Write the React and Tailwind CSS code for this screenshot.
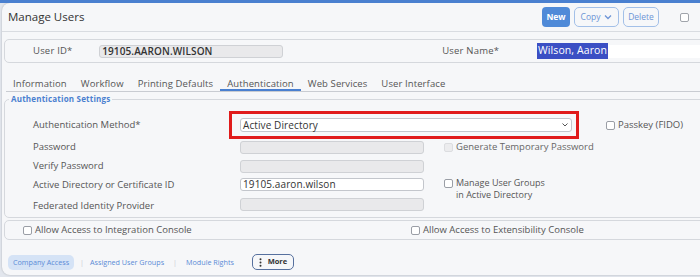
import React from 'react';

const font = { fontFamily: '"Open Sans", "Liberation Sans", sans-serif' };

const Check = ({ disabled, className = '' }) => (
  <span className={`inline-block w-[9px] h-[9px] rounded-[2px] border shrink-0 ${disabled ? 'border-[#dcdde0] bg-[#ececee]' : 'border-[#9a9ea6] bg-white'} ${className}`} />
);

const Field = ({ value, disabled, w = 'w-[184px]' }) => (
  <div className={`${w} h-[13px] shrink-0 rounded-[3px] border flex items-center px-[2px] text-[10px] text-[#333] tracking-[0.1px] ${disabled ? 'bg-[#e9e9eb] border-[#cfd1d5]' : 'bg-white border-[#c3c6cc]'}`}>
    {value}
  </div>
);

const tabs = ['Information', 'Workflow', 'Printing Defaults', 'Authentication', 'Web Services', 'User Interface'];

export default function App() {
  return (
    <div style={font} className="w-[700px] h-[277px] overflow-hidden bg-[#e2e6ed] border-t-[3px] border-[#4a80d0]">
      <div className="ml-[2px] w-[720px] h-[272px] bg-[#f6f7f9] rounded-l-[8px] shadow-[0_0_2px_rgba(0,0,0,0.25)] flex flex-col">
        {/* header */}
        <div className="w-[698px] h-[29px] flex items-center pl-[6px] border-b border-[#d9dce1]">
          <h1 className="text-[11.5px] text-[#333]">Manage Users</h1>
          <div className="ml-auto flex items-center gap-[4px]">
            <button className="h-[20px] w-[28px] rounded-[4px] bg-[#4f8ad8] text-white text-[8.5px] font-bold">New</button>
            <button className="h-[20px] w-[45px] rounded-[5px] border border-[#a3c0e8] text-[#6d95d6] text-[8.5px] flex items-center justify-center gap-[4px]">
              Copy
              <svg width="8" height="6" viewBox="0 0 8 6" fill="none" stroke="#6d95d6" strokeWidth="1.3"><path d="M1 1.5 4 4.5 7 1.5" /></svg>
            </button>
            <button className="h-[20px] w-[36px] rounded-[5px] border border-[#a3c0e8] text-[#6d95d6] text-[8.5px]">Delete</button>
            <span className="ml-[17px] mr-[11px] w-[9px] h-[9px] rounded-[2px] border border-[#a0a4ab] bg-white" />
          </div>
        </div>

        {/* user id box */}
        <div className="mt-[7px] ml-[2px] h-[24px] rounded-[5px] border border-[#d5d8dd] flex items-center pl-[28px] text-[9.5px] text-[#555] tracking-[0.2px]">
          <span className="w-[72px]">User ID*</span>
          <Field value={<span className="font-semibold">19105.AARON.WILSON</span>} disabled />
          <span className="ml-[159px] w-[103px]">User Name*</span>
          <div className="w-[200px] h-[13px] bg-white flex items-center text-[10.5px] tracking-[0.1px]">
            <span className="bg-[#3b4fc4] text-white px-[1px]">Wilson, Aaron</span>
          </div>
        </div>

        {/* tabs */}
        <div className="mt-[15px] ml-[4px] flex border-b border-[#c9ccd2] h-[14px]">
          {tabs.map(t => (
            <span key={t} className={`px-[7px] text-[9.5px] leading-[12px] tracking-[0.1px] text-[#555] ${t === 'Authentication' ? 'border-b-2 border-[#4a80d0]' : ''}`}>{t}</span>
          ))}
        </div>

        {/* fieldset */}
        <fieldset className="mt-[2px] ml-[2px] h-[124px] rounded-[5px] border border-[#d5d8dd]">
          <legend className="ml-[4px] px-[2px] text-[8px] font-bold text-[#4a7fd0] tracking-[0.2px] leading-[10px]">Authentication Settings</legend>
          <div className="pl-[28px] text-[9.5px] text-[#555]">
            <div className="mt-[7px] flex items-center h-[28px]">
              <span className="w-[196px]">Authentication Method*</span>
              <div className="w-[350px] h-[28px] border-[3px] border-[#e01b1b] flex items-center pl-[8px] pr-[4px]">
                <div className="w-full h-[14px] bg-white border border-[#c3c6cc] rounded-[3px] flex items-center justify-between px-[2px] text-[10px] text-[#333] tracking-[0.1px]">
                  Active Directory
                  <svg width="8" height="6" viewBox="0 0 8 6" fill="none" stroke="#555" strokeWidth="1"><path d="M1.5 1.5 4 4 6.5 1.5" /></svg>
                </div>
              </div>
              <Check className="ml-[27px]" />
              <span className="ml-[3px]">Passkey (FIDO)</span>
            </div>
            <div className="mt-[2px] flex items-center h-[13px]">
              <span className="w-[207px]">Password</span>
              <Field disabled />
              <Check disabled className="ml-[20px]" />
              <span className="ml-[3px] text-[#666]">Generate Temporary Password</span>
            </div>
            <div className="mt-[6px] flex items-center h-[13px]">
              <span className="w-[207px]">Verify Password</span>
              <Field disabled />
            </div>
            <div className="mt-[5px] flex items-start h-[13px]">
              <span className="w-[207px] leading-[13px]">Active Directory or Certificate ID</span>
              <Field value="19105.aaron.wilson" />
              <Check className="ml-[20px] mt-[1px]" />
              <span className="ml-[3px] flex flex-col text-[9px] leading-[12.5px] -mt-[1.5px]">
                <span>Manage User Groups</span>
                <span>in Active Directory</span>
              </span>
            </div>
            <div className="mt-[7px] flex items-center h-[13px]">
              <span className="w-[207px] mt-[3px]">Federated Identity Provider</span>
              <Field disabled />
            </div>
          </div>
        </fieldset>

        {/* console access */}
        <div className="mt-[2px] ml-[2px] h-[20px] rounded-[5px] border border-[#d5d8dd] flex items-center pl-[18px] text-[9.5px] text-[#555]">
          <Check />
          <span className="ml-[3px] w-[376px]">Allow Access to Integration Console</span>
          <Check />
          <span className="ml-[3px]">Allow Access to Extensibility Console</span>
        </div>

        {/* bottom nav */}
        <div className="mt-[14px] ml-[6px] flex items-center text-[7.2px] text-[#5b8bd6]">
          <span className="h-[15px] px-[5px] rounded-[5px] bg-[#d5e3f6] flex items-center">Company Access</span>
          <span className="mx-[6px] text-[#c9ccd2]">|</span>
          <span>Assigned User Groups</span>
          <span className="mx-[9px] text-[#c9ccd2]">|</span>
          <span>Module Rights</span>
          <button className="ml-[18px] h-[16px] w-[42px] rounded-[5px] border border-[#56709e] flex items-center justify-center gap-[6px] text-[7.5px] font-bold text-[#333]">
            <svg width="3" height="9" viewBox="0 0 3 9" fill="#333"><circle cx="1.5" cy="1.2" r="1" /><circle cx="1.5" cy="4.5" r="1" /><circle cx="1.5" cy="7.8" r="1" /></svg>
            More
          </button>
        </div>
      </div>
    </div>
  );
}
